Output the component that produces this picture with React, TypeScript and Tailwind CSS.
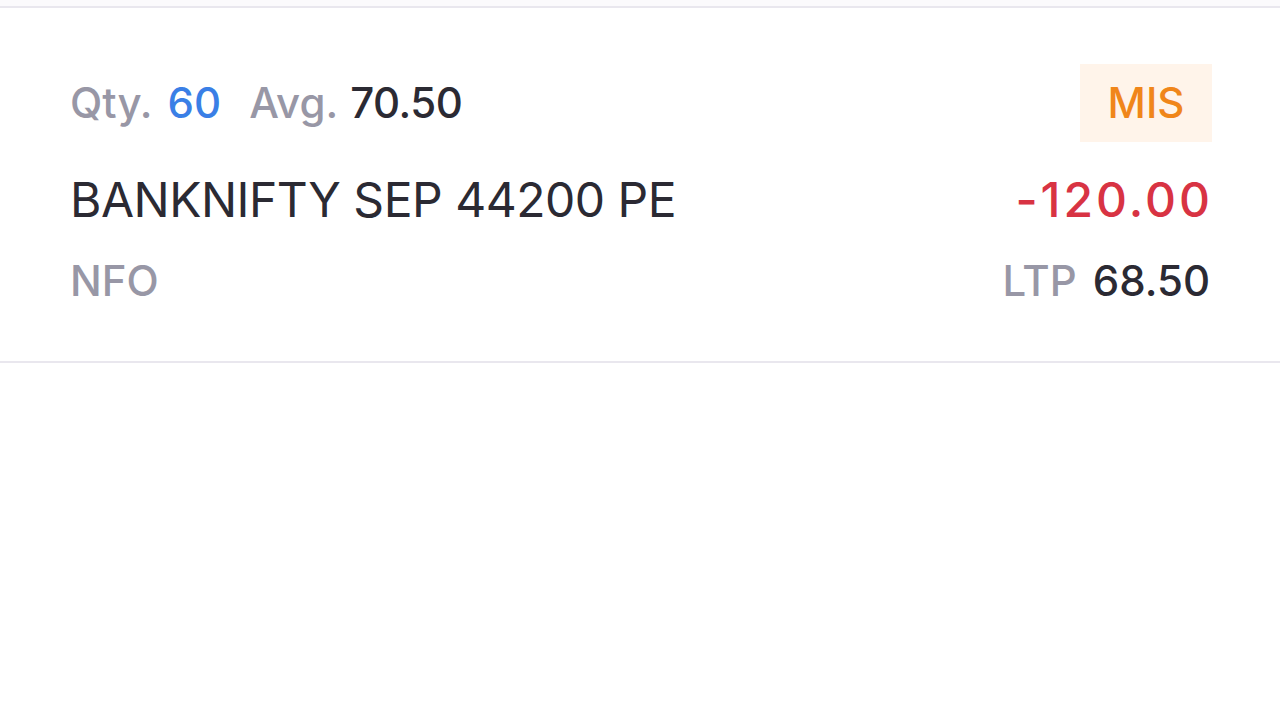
export default function App() {
  return (
    <div className="w-[1280px] h-[720px] bg-white overflow-hidden" style={{ fontFamily: 'Inter, "Noto Sans", sans-serif' }}>
      <div className="h-[6px] bg-[#fbfafc]" />
      <div className="border-t-[2px] border-b-[2px] border-[#e9e7ee] px-[70px] pt-[56px] pb-[55px]">
        <div className="flex items-center justify-between h-[78px]">
          <div className="flex items-baseline text-[42px] leading-none font-medium">
            <span className="text-[#9897a6]">Qty.</span>
            <span className="text-[#3a7fe6] ml-[15px]">60</span>
            <span className="text-[#9897a6] ml-[28px]">Avg.</span>
            <span className="text-[#2b2a33] ml-[12px] tracking-[-0.5px]">70.50</span>
          </div>
          <div className="w-[132px] h-[78px] mr-[-2px] bg-[#fff4ea] flex items-center justify-center text-[42px] leading-none font-medium text-[#f0861a]">
            MIS
          </div>
        </div>
        <div className="flex items-center justify-between h-[56px] mt-[30px]">
          <div className="text-[48px] leading-none font-normal tracking-[-0.5px] text-[#2b2a33]">BANKNIFTY SEP 44200 PE</div>
          <div className="text-[48px] leading-none font-medium tracking-[3px] mr-[-3px] text-[#d83343]">-120.00</div>
        </div>
        <div className="flex items-center justify-between h-[50px] mt-[28px]">
          <div className="text-[42px] leading-none font-medium text-[#9897a6]">NFO</div>
          <div className="flex items-baseline text-[42px] leading-none font-medium">
            <span className="text-[#9897a6]">LTP</span>
            <span className="text-[#2b2a33] ml-[16px]">68.50</span>
          </div>
        </div>
      </div>
    </div>
  );
}
